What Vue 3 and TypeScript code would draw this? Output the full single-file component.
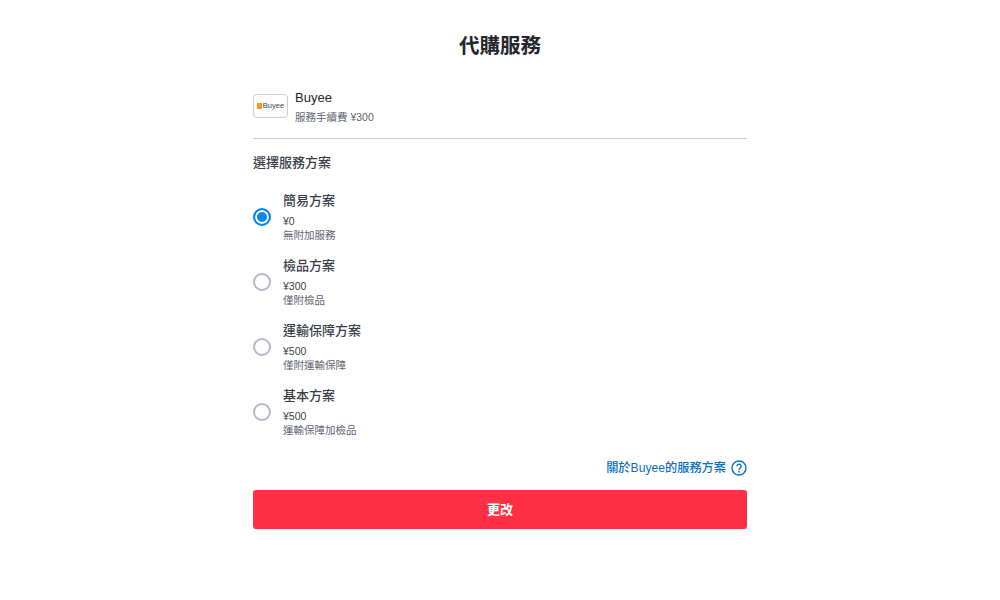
<script setup lang="ts">
interface Plan {
  name: string;
  price: string;
  desc: string;
}

const plans: Plan[] = [
  { name: '簡易方案', price: '¥0', desc: '無附加服務' },
  { name: '檢品方案', price: '¥300', desc: '僅附檢品' },
  { name: '運輸保障方案', price: '¥500', desc: '僅附運輸保障' },
  { name: '基本方案', price: '¥500', desc: '運輸保障加檢品' },
];
const selected = 0;
</script>

<template>
  <div class="page">
    <h1 class="title">代購服務</h1>
    <div class="provider">
      <div class="logo">
        <span class="logo-mark"></span><span class="logo-text">Buyee</span>
      </div>
      <div class="provider-info">
        <div class="provider-name">Buyee</div>
        <div class="provider-fee">服務手續費 ¥300</div>
      </div>
    </div>
    <div class="section-title">選擇服務方案</div>
    <div class="plans">
      <div v-for="(plan, i) in plans" :key="plan.name" class="plan">
        <span class="radio" :class="{ checked: i === selected }"></span>
        <div class="plan-info">
          <div class="plan-name">{{ plan.name }}</div>
          <div class="plan-line">{{ plan.price }}</div>
          <div class="plan-line muted">{{ plan.desc }}</div>
        </div>
      </div>
    </div>
    <div class="about">
      <span>關於Buyee的服務方案</span>
      <svg width="16" height="16" viewBox="0 0 16 16" fill="none">
        <circle cx="8" cy="8" r="7" stroke="#0b6fc4" stroke-width="1.4" />
        <path d="M5.9 6.3a2.1 2.1 0 1 1 3.2 1.8c-.7.4-1.1.8-1.1 1.6" stroke="#0b6fc4" stroke-width="1.4" />
        <circle cx="8" cy="11.7" r=".9" fill="#0b6fc4" />
      </svg>
    </div>
    <button class="submit">更改</button>
  </div>
</template>

<style>
html,
body {
  background: #fff;
}
</style>

<style scoped>
.page {
  box-sizing: border-box;
  width: 494px;
  height: 600px;
  margin: 0 auto;
  padding-top: 33px;
  font-family: "Liberation Sans", "Noto Sans CJK TC", sans-serif;
  color: #23262e;
}

.title {
  margin: 0;
  font-size: 20.5px;
  line-height: 26px;
  font-weight: 700;
  text-align: center;
}

.provider {
  display: flex;
  gap: 7px;
  margin-top: 31px;
  padding-bottom: 13px;
  border-bottom: 1px solid #c8cbd9;
}

.logo {
  box-sizing: border-box;
  display: flex;
  align-items: center;
  justify-content: center;
  gap: 1px;
  width: 35px;
  height: 24px;
  margin-top: 4px;
  border: 1px solid #c9ccd8;
  border-radius: 4px;
}

.logo-mark {
  width: 5px;
  height: 6px;
  background: #f29a1f;
}

.logo-text {
  font-size: 7.5px;
  line-height: 8px;
  color: #3f4450;
}

.provider-name {
  font-size: 13px;
  line-height: 16px;
}

.provider-fee {
  margin-top: 4px;
  font-size: 10.5px;
  line-height: 15px;
  color: #5e6370;
}

.section-title {
  margin-top: 15px;
  font-size: 13px;
  line-height: 18px;
  font-weight: 500;
  color: #3a3e48;
}

.plans {
  display: flex;
  flex-direction: column;
  gap: 15px;
  margin-top: 20px;
}

.plan {
  display: flex;
  align-items: center;
  gap: 12px;
  height: 50px;
}

.radio {
  box-sizing: border-box;
  flex: none;
  width: 18px;
  height: 18px;
  border: 2.5px solid #b5b8c8;
  border-radius: 50%;
}

.radio.checked {
  border-width: 2px;
  border-color: #0a84f0;
  background: #0a84f0;
  box-shadow: inset 0 0 0 2px #fff;
}

.plan-name {
  font-size: 13px;
  line-height: 18px;
  font-weight: 500;
  color: #3a3e48;
}

.plan-line {
  margin-top: 5px;
  font-size: 10.5px;
  line-height: 13px;
  color: #3d414c;
}

.plan-line.muted {
  margin-top: 1px;
  color: #5e6370;
}

.about {
  display: flex;
  align-items: center;
  justify-content: flex-end;
  gap: 5px;
  margin-top: 23px;
  font-size: 12.2px;
  line-height: 16px;
  font-weight: 500;
  color: #0b6fc4;
}

.submit {
  display: block;
  width: 100%;
  height: 39px;
  margin-top: 14px;
  padding: 0 0 2px;
  border: 0;
  border-radius: 3px;
  background: #ff2f45;
  color: #fff;
  font-family: inherit;
  font-size: 13px;
  font-weight: 700;
}
</style>
